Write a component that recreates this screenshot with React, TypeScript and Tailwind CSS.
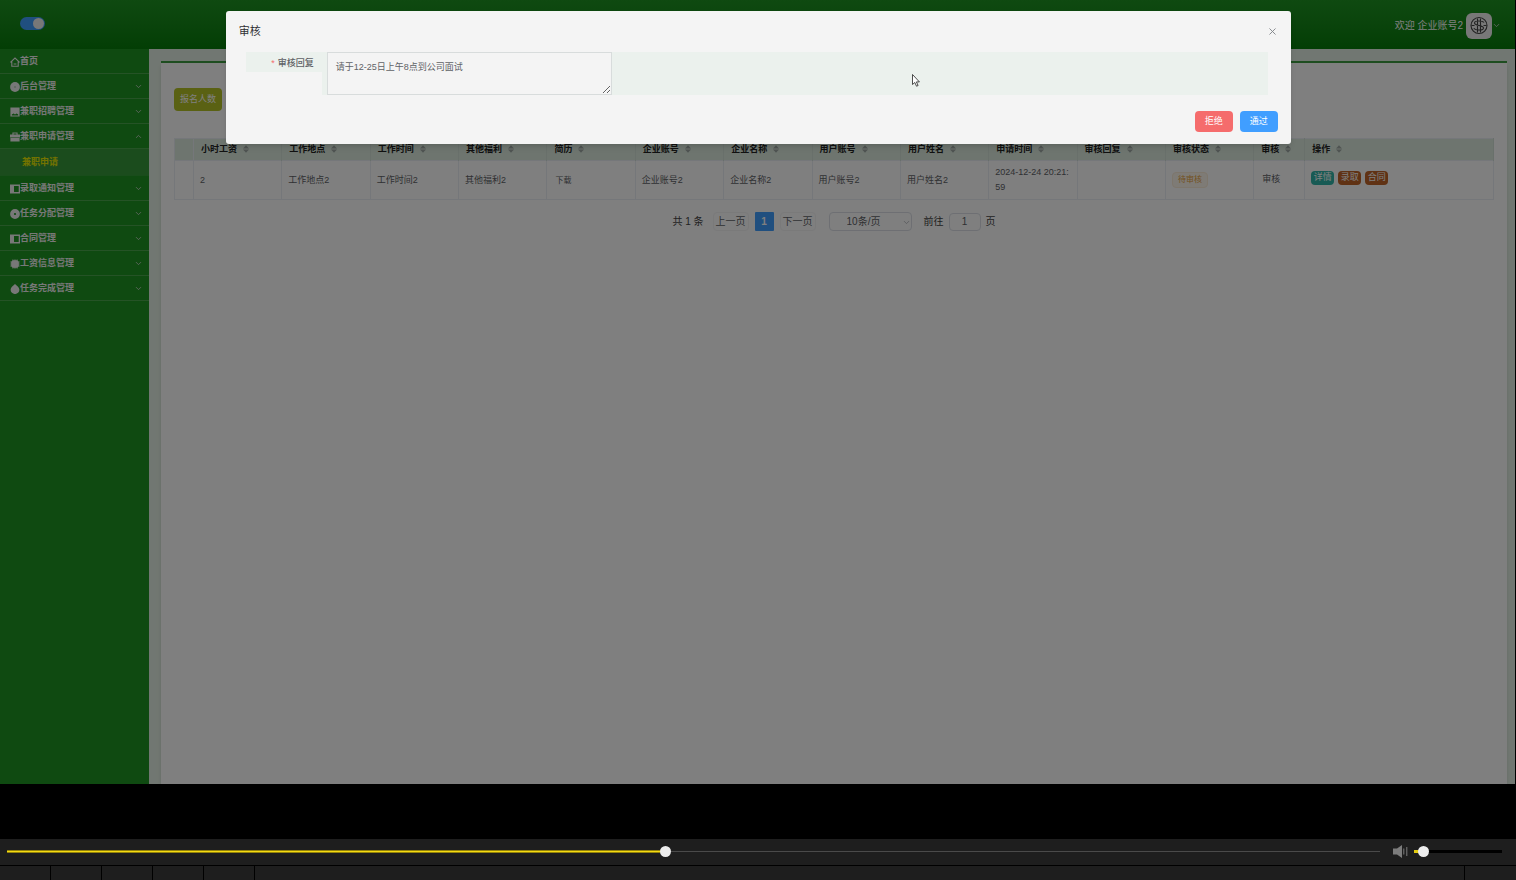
import type { ReactNode } from "react";
import { ChevronDown, ChevronUp, X } from "lucide-react";

const MENU = [
  { icon: "home", label: "首页" },
  { icon: "disc", label: "后台管理", arrow: "down" },
  { icon: "picture", label: "兼职招聘管理", arrow: "down" },
  { icon: "case", label: "兼职申请管理", arrow: "up", children: ["兼职申请"] },
  { icon: "panel", label: "录取通知管理", arrow: "down" },
  { icon: "help", label: "任务分配管理", arrow: "down" },
  { icon: "panel", label: "合同管理", arrow: "down" },
  { icon: "chip", label: "工资信息管理", arrow: "down" },
  { icon: "drop", label: "任务完成管理", arrow: "down" },
];

const COLUMNS = [
  { label: "小时工资", value: "2" },
  { label: "工作地点", value: "工作地点2" },
  { label: "工作时间", value: "工作时间2" },
  { label: "其他福利", value: "其他福利2" },
  { label: "简历", value: "download" },
  { label: "企业账号", value: "企业账号2" },
  { label: "企业名称", value: "企业名称2" },
  { label: "用户账号", value: "用户账号2" },
  { label: "用户姓名", value: "用户姓名2" },
  { label: "申请时间", value: "2024-12-24 20:21:59" },
  { label: "审核回复", value: "" },
  { label: "审核状态", value: "status" },
];

const ICONS: Record<string, ReactNode> = {
  home: (
    <path d="M.4 5.400 5 1l4.600 4.400M1.800 4.600V9.200h6.400V4.600M3.600 7h2.800" fill="none" stroke="currentColor" strokeWidth="1.100" />
  ),
  disc: (
    <>
      <circle cx="5" cy="5" r="4.9" />
      <circle cx="5" cy="5" r=".8" className="fill-[#8fb891]" />
    </>
  ),
  picture: <path fillRule="evenodd" d="M.4.4h9.200v9.200H.4zM1.800 7.600v1h6.400v-1L6.600 6.400 5 7.400 3.600 6.600z" />,
  case: <path fillRule="evenodd" d="M2.400 2.400V.4h5.200v2H10v3H0v-3zM3.500 1.500v.9h3v-.9zM.4 6.100h9.200v3.500H.4z" />,
  panel: <path fillRule="evenodd" d="M0 .6h10v8.800H0zM4 1.900v6.200h4.700V1.900z" />,
  help: <path fillRule="evenodd" d="M5 .1a4.900 4.900 0 1 1 0 9.800A4.900 4.900 0 0 1 5 .1zm0 3.800a1.100 1.100 0 1 0 0 2.200 1.100 1.100 0 0 0 0-2.200z" />,
  chip: <path d="M2.4.4h1v.8h1V.4h1.200v.8h1V.4h1v1l1 1h1v1h-.8v1h.8v1.200h-.8v1h.8v1h-1l-1 1v1h-1v-.8h-1v.8H4.400v-.8h-1v.8h-1v-1l-1-1h-1v-1h.8v-1H.4V4.400h.8v-1H.4v-1h1l1-1z" />,
  drop: <path d="M5 0c1.600 1.600 4.400 3.200 4.400 5.800A4.200 4.200 0 0 1 5 10 4.200 4.200 0 0 1 .6 5.800C.6 3.200 3.400 1.600 5 0z" />,
};

function MenuIcon({ name }: { name: string }) {
  return (
    <svg viewBox="0 0 10 10" className="size-[10px] shrink-0 fill-current">
      {ICONS[name]}
    </svg>
  );
}

function SortIcon() {
  return (
    <svg viewBox="0 0 6 8" className="ml-1.5 inline-block h-2 w-1.5 fill-[#9fa8a4]">
      <path d="M0 3.400 3 .2l3 3.200zM0 4.600l3 3.200 3-3.200z" />
    </svg>
  );
}

function Header() {
  return (
    <header className="flex h-[49px] items-center justify-between bg-linear-to-b from-[#1e9422] to-[#067c09] pr-3.5 pl-5">
      <label className="mb-0.5 flex h-[13px] w-[25px] items-center justify-end rounded-full bg-[#409eff] p-px">
        <input type="checkbox" aria-label="切换菜单" defaultChecked className="peer sr-only" />
        <span className="size-[11px] rounded-full bg-[#f0f0f0]" />
      </label>
      <div className="mt-0.5 flex items-center text-[10px] text-white">
        <span>欢迎 企业账号2</span>
        <svg viewBox="0 0 26 26" className="ml-[3px] size-[26px] rounded-md bg-[#f0f0f0]">
          <g fill="none" stroke="#444" strokeWidth="1.100">
            <circle cx="13" cy="12.500" r="8" />
            <path d="M11.500 5.500v14M14.500 5.500v14M18 9.500c-1.500-1.800-9.500-2.300-9.500.5 0 3 9 2 9 5 0 2.700-8 2.700-9.700.3M5.500 12.500h3M17.500 12.500h3" />
          </g>
        </svg>
        <ChevronDown size={9} strokeWidth={2} className="text-[#d8d8d8]" />
      </div>
    </header>
  );
}

function Sidebar() {
  return (
    <nav className="w-[149px] shrink-0 bg-[#1e9422] text-[9px] font-bold text-[#f0f0f0]">
      {MENU.map(({ icon, label, arrow, children }) => (
        <div key={label}>
          <button
            type="button"
            className="flex h-[25px] w-full items-center border-b border-[#4aa64d] pt-px pr-1.5 pl-[10px]"
          >
            <MenuIcon name={icon} />
            <span className="pt-px">{label}</span>
            {arrow === "down" && <ChevronDown size={9} strokeWidth={2} className="ml-auto text-[#d8d8d8]" />}
            {arrow === "up" && <ChevronUp size={9} strokeWidth={2} className="ml-auto text-[#d8d8d8]" />}
          </button>
          {children?.map((child) => (
            <a
              key={child}
              href="#"
              className="flex h-[27px] items-center border-b border-[#339a36] bg-[#37983a] pt-0.5 pl-[22px] text-[#e6e600]"
            >
              {child}
            </a>
          ))}
        </div>
      ))}
    </nav>
  );
}

function CellValue({ value }: { value: string }) {
  if (value === "download") {
    return (
      <button type="button" className="px-0.5 text-[8px]">
        下载
      </button>
    );
  }
  if (value === "status") {
    return (
      <span className="inline-block rounded-sm border border-[#faecd8] bg-[#fdf6ec] px-[5px] text-[8px] leading-[14px] text-[#e6a23c]">
        待审核
      </span>
    );
  }
  return <>{value}</>;
}

function ApplyTable() {
  return (
    <table className="w-full table-fixed border-collapse border border-[#ebeef5] text-left text-[9px]">
      <colgroup>
        <col className="w-[19px]" />
        {COLUMNS.map(({ label }) => (
          <col key={label} className="w-[6.7%]" />
        ))}
        <col className="w-[51px]" />
        <col />
      </colgroup>
      <thead className="bg-[#dcebdf] text-[#222]">
        <tr className="h-[22px]">
          <td className="border border-[#ebeef5]" />
          {[...COLUMNS.map((c) => c.label), "审核", "操作"].map((label) => (
            <th key={label} className="border-x border-[#d3e0d6] pl-[7px] font-bold whitespace-nowrap">
              <span>{label}</span>
              <SortIcon />
            </th>
          ))}
        </tr>
      </thead>
      <tbody className="text-[#606266]">
        <tr className="h-[39px]">
          <td className="border border-[#ebeef5]" />
          {COLUMNS.map(({ label, value }) => (
            <td key={label} className="border border-[#ebeef5] pr-1 pl-1.5 leading-[15px] break-all">
              <CellValue value={value} />
            </td>
          ))}
          <td className="border border-[#ebeef5] pl-2">
            <button type="button">审核</button>
          </td>
          <td className="border border-[#ebeef5] pl-1.5">
            <div className="mb-1 flex gap-1 text-white">
              <button type="button" className="h-3.5 w-[23px] rounded-sm bg-[#2fb5a8]">详情</button>
              <button type="button" className="h-3.5 w-[23px] rounded-sm bg-[#c06428]">录取</button>
              <button type="button" className="h-3.5 w-[23px] rounded-sm bg-[#c06428]">合同</button>
            </div>
          </td>
        </tr>
      </tbody>
    </table>
  );
}

function Pagination() {
  return (
    <div className="mt-3 flex items-center justify-center text-[10px] text-[#606266]">
      <span className="text-[#444]">共 1 条</span>
      <button type="button" className="ml-[9px] h-[19px] w-9 rounded-sm border border-[#f4f4f5]">上一页</button>
      <button type="button" className="mx-1.5 h-[19px] w-[19px] rounded-[1px] bg-[#409eff] font-bold text-white">1</button>
      <button type="button" className="h-[19px] w-9 rounded-sm border border-[#f4f4f5]">下一页</button>
      <div className="relative ml-[13px]">
        <select
          aria-label="每页条数"
          className="h-[19px] w-[83px] appearance-none rounded-sm border border-[#dcdfe6] pl-[17px]"
        >
          <option>10条/页</option>
        </select>
        <ChevronDown size={9} className="pointer-events-none absolute top-1.5 right-px text-[#a8abb2]" />
      </div>
      <label className="ml-3 flex items-center gap-[5px] text-[#444]">
        前往
        <input
          type="text"
          defaultValue="1"
          className="h-[18px] w-8 rounded-sm border border-[#dcdfe6] text-center text-[#606266]"
        />
        页
      </label>
    </div>
  );
}

function AuditDialog() {
  return (
    <section
      role="dialog"
      aria-label="审核"
      className="absolute top-[11px] right-[14.800%] left-[14.900%] rounded-[3px] bg-[#f4f4f4] pt-3 pr-[13px] pb-3 pl-[13px] shadow-md"
    >
      <div className="flex h-4 items-center justify-between text-[#303133]">
        <h2 className="text-[11px]">审核</h2>
        <button type="button" aria-label="关闭" className="text-[#808388]">
          <X size={11} strokeWidth={2} />
        </button>
      </div>
      <form className="mt-[13px] mr-[10px] ml-[7px] flex items-start text-[9px] text-[#606266]">
        <label htmlFor="reply" className="h-5 w-[76px] bg-[#ebf1ed] pr-2 text-right leading-[23px] font-medium">
          <span className="mr-[3px] text-[#f56c6c]">*</span>审核回复
        </label>
        <div className="flex flex-1 bg-[#ebf1ed] pl-[5px]">
          <textarea
            id="reply"
            defaultValue="请于12-25日上午8点到公司面试"
            className="h-[43px] w-[285px] border border-[#d8dcdc] bg-[#f4f4f4] px-2 py-[7px] leading-[14px]"
          />
        </div>
      </form>
      <div className="mt-4 flex justify-end gap-[7px] text-[9px] text-white">
        <button type="button" className="h-[21px] w-[38px] rounded-sm bg-[#f56c6c]">拒绝</button>
        <button type="button" className="h-[21px] w-[38px] rounded-sm bg-[#409eff]">通过</button>
      </div>
    </section>
  );
}

function PlayerBar() {
  return (
    <footer className="bg-[#1e1e1e]">
      <div className="flex h-[26px] items-center pr-[14px] pb-px pl-[7px]">
        <div className="relative flex h-[11px] flex-1 items-center">
          <div className="h-[3px] w-[48%] border-y border-[#94830a] bg-[#f5db12]" />
          <div className="h-px flex-1 bg-[#4a4a4a]" />
          <input type="range" aria-label="播放进度" defaultValue={48} className="absolute inset-0 opacity-0" />
          <span className="pointer-events-none absolute left-[48%] -ml-1.5 size-[11px] rounded-full bg-[#ededed]" />
        </div>
        <svg viewBox="0 0 15 13" className="ml-[13px] h-[13px] w-[15px] fill-[#7c7c7c]">
          <path d="M0 3.500h4l5-3.500v13L4 9.500H0zM10.300 3.500h1v6h-1zM13.300 2h1v9h-1z" />
        </svg>
        <div className="relative ml-1.5 flex h-[11px] w-[88px] items-center">
          <div className="h-[3px] w-2 bg-[#e2ca10]" />
          <div className="h-[3px] flex-1 bg-black" />
          <input type="range" aria-label="音量" defaultValue={10} className="absolute inset-0 w-full opacity-0" />
          <span className="pointer-events-none absolute left-1 size-[11px] rounded-full bg-[#ededed]" />
        </div>
      </div>
      <div className="flex h-[15px] border-t border-black">
        {[1, 2, 3, 4, 5].map((n) => (
          <div key={n} className="w-[51px] border-r border-black" />
        ))}
        <div className="flex-1 border-r border-black" />
        <div className="w-[51px]" />
      </div>
    </footer>
  );
}

export default function App() {
  return (
    <div className="flex min-h-screen flex-col bg-black font-['Liberation_Sans','Noto_Sans_CJK_SC',sans-serif]">
      <div className="relative mr-px flex flex-1 flex-col">
        <Header />
        <div className="flex flex-1">
          <Sidebar />
          <main className="flex min-w-0 flex-1 flex-col bg-[#e3efe4] pt-3 pr-2 pl-3">
            <div className="flex-1 border-t-2 border-[#3c9a40] bg-white px-[13px] pt-[25px] shadow-md">
              <button type="button" className="mb-[27px] block h-[23px] rounded-sm bg-[#b5c227] px-1.5 text-[9px] text-white">
                报名人数
              </button>
              <ApplyTable />
              <Pagination />
            </div>
          </main>
        </div>
        <div className="absolute inset-0 bg-black/50" />
        <AuditDialog />
        <svg viewBox="0 0 8 13" className="absolute top-[74px] left-[60.200%] h-[13px] w-2">
          <path d="M.5.5v10l2.300-2 1.700 3.700 1.600-.7-1.700-3.600h3z" fill="#fff" stroke="#222" strokeWidth=".8" />
        </svg>
      </div>
      <div className="h-[55px]" />
      <PlayerBar />
    </div>
  );
}
